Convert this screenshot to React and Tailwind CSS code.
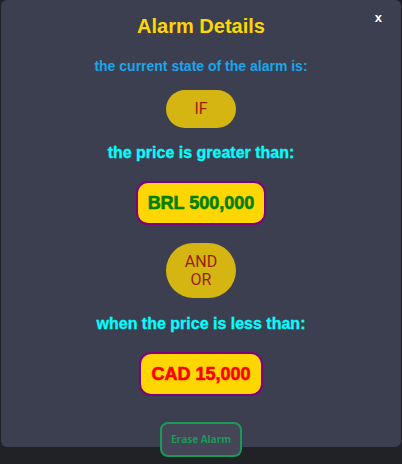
import React from 'react';

const AlarmDetails = () => {
  return (
    <div className="w-[402px] h-[464px] bg-[#212226] overflow-hidden">
      <div className="relative ml-[1px] w-[400px] h-[447px] bg-[#3c3f50] rounded-[6px] flex flex-col items-center font-['Liberation_Sans',Arial,sans-serif]">
        <button className="absolute right-[19px] top-[10px] text-white font-bold text-[13px] leading-[16px]">x</button>

        <h1 className="shrink-0 mt-[14px] text-[20px] leading-[24px] font-bold text-[#ffd700]">Alarm Details</h1>

        <p className="shrink-0 mt-[20px] text-[14px] leading-[17px] font-bold text-[#1aa6ec]">the current state of the alarm is:</p>

        <div className="shrink-0 mt-[15px] w-[70px] h-[38px] rounded-full bg-[#d4b512] flex items-center justify-center font-['Roboto',sans-serif] text-[16px] text-[#9a1e0a]">
          IF
        </div>

        <p className="shrink-0 mt-[15px] text-[16px] leading-[20px] font-bold text-[#00ffff] [-webkit-text-stroke:0.3px_#00ffff]">the price is greater than:</p>

        <div className="shrink-0 mt-[18px] h-[44px] px-[10px] flex items-center rounded-[12px] border-2 border-[#800080] bg-[#ffd700] text-[18px] font-bold text-[#008000] [-webkit-text-stroke:0.6px_#008000]">
          BRL 500,000
        </div>

        <div className="shrink-0 mt-[18px] w-[70px] h-[55px] rounded-full bg-[#d4b512] flex flex-col items-center justify-center font-['Roboto',sans-serif] text-[16px] leading-[18px] text-[#9a1e0a]">
          <span>AND</span>
          <span>OR</span>
        </div>

        <p className="shrink-0 mt-[16px] text-[16px] leading-[20px] font-bold text-[#00ffff] [-webkit-text-stroke:0.3px_#00ffff]">when the price is less than:</p>

        <div className="shrink-0 mt-[18px] h-[44px] px-[10px] flex items-center rounded-[12px] border-2 border-[#800080] bg-[#ffd700] text-[18px] font-bold text-[#ff0000] [-webkit-text-stroke:0.6px_#ff0000]">
          CAD 15,000
        </div>

        <button className="shrink-0 mt-[26px] w-[82px] h-[35px] rounded-[8px] border-2 border-[#1a9a55] bg-[#444658] font-['Open_Sans',sans-serif] text-[10px] font-bold text-[#1a9a55]">
          Erase Alarm
        </button>
      </div>
    </div>
  );
};

export default function App() {
  return <AlarmDetails />;
}
